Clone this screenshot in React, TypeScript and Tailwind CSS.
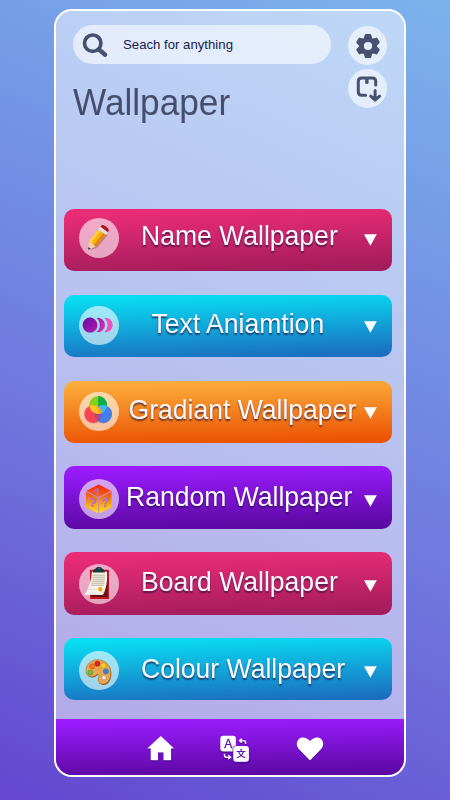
import React from "react";

function PencilIcon() {
  return (
    <svg viewBox="0 0 40 40" className="size-10 shrink-0">
      <path d="M11 32 L18 30 L28.5 17.5 L26 14 Z" fill="#7c2f4f" opacity="0.35" />
      <path d="M9 31.8 L10.6 22.8 L13.6 23.2 L16.9 28.6 Z" fill="#f3cfae" />
      <path d="M9 31.8 L9.6 28.9 L11.7 30.8 Z" fill="#3b3338" />
      <path d="M10.4 22.8 L19.5 11.4 L22 13 L12.6 24.6 Z" fill="#ffd02e" />
      <path d="M12.4 24.7 L21.7 12.9 L24.6 14.8 L14.8 27 Z" fill="#fbb212" />
      <path d="M14.7 27 L24.4 14.7 L26.9 16.7 L17 29 Z" fill="#dd8a0b" />
      <path d="M19.4 11.5 L21.6 8.8 L28.9 14.2 L26.9 16.8 Z" fill="#dfe3e8" />
      <path d="M21.6 8.8 L22.4 7.6 Q23.1 6.6 24.3 7 Q28 8.6 29.4 10.7 Q30 11.6 29.6 12.7 L28.9 14.2 Z" fill="#b51218" />
    </svg>
  );
}

function MotionIcon() {
  return (
    <svg viewBox="0 0 40 40" className="size-10 shrink-0">
      <defs>
        <linearGradient id="motionBall" x1="0" y1="0" x2="1" y2="1">
          <stop offset="0" stopColor="#6a0aa0" />
          <stop offset="1" stopColor="#b31ab0" />
        </linearGradient>
        <linearGradient id="motionMid" x1="0" y1="0" x2="1" y2="1">
          <stop offset="0" stopColor="#a316ab" />
          <stop offset="1" stopColor="#dc35bd" />
        </linearGradient>
      </defs>
      <circle cx="11.2" cy="19.8" r="7.4" fill="#31627e" opacity="0.3" />
      <circle cx="11" cy="19" r="7.4" fill="url(#motionBall)" />
      <path d="M17.6 11.9 A7.2 7.2 0 1 1 17.6 26.1 A9.4 9.4 0 0 0 17.6 11.9Z" fill="url(#motionMid)" />
      <path d="M25.3 11.9 A7.2 7.2 0 1 1 25.3 26.1 A9.4 9.4 0 0 0 25.3 11.9Z" fill="#ee4fbd" />
    </svg>
  );
}

function ColorCirclesIcon() {
  return (
    <svg viewBox="0 0 40 40" className="size-10 shrink-0">
      <defs>
        <clipPath id="cTop"><circle cx="19.2" cy="14" r="8.9" /></clipPath>
        <clipPath id="cLeft"><circle cx="14.2" cy="23" r="8.9" /></clipPath>
        <clipPath id="cRight"><circle cx="24.2" cy="23" r="8.9" /></clipPath>
      </defs>
      <circle cx="14.2" cy="23.8" r="8.9" fill="#a34728" opacity="0.3" />
      <circle cx="24.2" cy="23.8" r="8.9" fill="#a34728" opacity="0.3" />
      <circle cx="19.2" cy="14" r="8.9" fill="#85cf16" />
      <rect x="19.2" y="5" width="10" height="19" fill="#0ead4c" clipPath="url(#cTop)" />
      <circle cx="14.2" cy="23" r="8.9" fill="#fb4354" />
      <circle cx="24.2" cy="23" r="8.9" fill="#437eed" />
      <circle cx="14.2" cy="23" r="8.9" fill="#fdcb20" clipPath="url(#cTop)" />
      <circle cx="24.2" cy="23" r="8.9" fill="#3dbcea" clipPath="url(#cTop)" />
      <g clipPath="url(#cLeft)">
        <circle cx="24.2" cy="23" r="8.9" fill="#e0403d" />
        <rect x="19.2" y="14" width="10" height="18" fill="#7d55cd" clipPath="url(#cRight)" />
        <g clipPath="url(#cRight)">
          <circle cx="19.2" cy="14" r="8.9" fill="#ffc91b" />
          <rect x="19.2" y="13" width="8" height="10" fill="#fb9d24" clipPath="url(#cTop)" />
        </g>
      </g>
    </svg>
  );
}

function DiceIcon() {
  return (
    <svg viewBox="0 0 40 40" className="size-10 shrink-0">
      <defs>
        <linearGradient id="dice" x1="0" y1="0" x2="0" y2="1">
          <stop offset="0" stopColor="#fb2307" />
          <stop offset="0.35" stopColor="#fb5a0b" />
          <stop offset="0.75" stopColor="#feb715" />
          <stop offset="1" stopColor="#ffe526" />
        </linearGradient>
      </defs>
      <path d="M19.7 5.5 L32.5 12 V28.2 L19.7 34.8 L6.9 28.2 V12 Z" fill="url(#dice)" />
      <path d="M7 12.3 L19.7 18.8 L32.4 12.3 M19.7 18.8 V34.8" fill="none" stroke="#c392cb" strokeWidth="1.2" />
      <g fill="#a878c4" stroke="#a878c4" strokeWidth="0.3" fontFamily="Liberation Sans, sans-serif" fontWeight="700" textAnchor="middle">
        <text fontSize="13" transform="translate(13.2 27.8) skewY(25)">?</text>
        <text fontSize="13" transform="translate(26.2 27.8) skewY(-25)">?</text>
        <text fontSize="10" transform="translate(19.8 15.4) rotate(-30) scale(1.15 .85)">?</text>
      </g>
    </svg>
  );
}

function BoardIcon() {
  return (
    <svg viewBox="0 0 40 40" className="size-10 shrink-0">
      <rect x="11" y="5.7" width="19" height="29.2" rx="0.6" fill="#c31222" />
      <path d="M12.5 8 H28.5 V33 H12.5Z" fill="#641018" />
      <path d="M12.8 7.8 H28 C28.6 16 27.5 25 23.7 31 L5.3 30.8 C9.8 25 12.2 17 12.8 7.8Z" fill="#f7f2e9" />
      <path d="M23.7 31 C23.8 29.4 23.5 28.4 22.8 27.4 C25 28.3 26.2 27 27 23.5 C26.4 26.4 25.3 29 23.7 31Z" fill="#d5c9b6" />
      <g stroke="#b8ab91" strokeWidth="0.9">
        <path d="M14 11.2 H26.2 M13.7 13.2 H26.1 M13.4 15.2 H25.9 M13 17.2 H25.6 M12.4 19.2 H25.2 M11.8 21.2 H24.7" />
      </g>
      <path d="M9.6 25.5 H16" stroke="#d1c8b6" strokeWidth="0.6" />
      <circle cx="21.3" cy="25.2" r="2.2" fill="#efa91b" />
      <path d="M14 8.6 Q14 5.4 16.4 4.8 Q17.6 2.7 20 2.7 Q22.3 2.7 23.4 4.8 Q25.8 5.4 25.8 8.6Z" fill="#123b3e" />
      <circle cx="20" cy="4.4" r="0.8" fill="#42777a" />
    </svg>
  );
}

function PaletteIcon() {
  const shape =
    "M7 19.8 C7 13 12.2 8.7 18.6 8.7 C26.2 8.7 31.8 14.5 31.8 21.6 C31.8 28.4 29 33 24 33 C20.8 33 19 31 19.3 28.2 C19.6 25.6 20.8 24.4 19.2 23.4 C17.4 22.3 16.8 25.5 13.2 25.7 C9.4 25.8 7 23.2 7 19.8Z";
  return (
    <svg viewBox="0 0 40 40" className="size-10 shrink-0">
      <path d={shape} fill="#76512c" transform="translate(0.5 0.8)" />
      <path d={shape} fill="#eba750" stroke="#a86d2b" strokeWidth="0.6" />
      <g strokeWidth="0.4">
        <circle cx="11.3" cy="21.5" r="2.5" fill="#62c23c" stroke="#3f782b" />
        <circle cx="13.1" cy="15.4" r="2.6" fill="#f7761a" stroke="#ae4a13" />
        <circle cx="18.4" cy="12.7" r="2.6" fill="#dc2222" stroke="#901616" />
        <circle cx="24.3" cy="14.6" r="2.5" fill="#f1d321" stroke="#a68813" />
        <circle cx="27" cy="20.3" r="2.6" fill="#3587e2" stroke="#225793" />
        <circle cx="25" cy="26.7" r="2.1" fill="#f1f7fa" stroke="#8a6238" />
      </g>
    </svg>
  );
}

const pink = "bg-[linear-gradient(178deg,#ea2c77_8%,#a31c5b_95%)]";
const blue = "bg-[linear-gradient(178deg,#08def2_5%,#1b6ec0_95%)]";
const orange = "bg-[linear-gradient(179deg,#fcaf3d_2%,#eb5202_96%)]";
const purple = "bg-[linear-gradient(179deg,#9c1cff_4%,#5a08a0_96%)]";

const rows = [
  { label: "Name Wallpaper", icon: <PencilIcon />, color: pink, pad: "pt-[9px]", indent: "ml-[22.5px]" },
  { label: "Text Aniamtion", icon: <MotionIcon />, color: blue, pad: "pt-[11px]", indent: "ml-[33px]" },
  { label: "Gradiant Wallpaper", icon: <ColorCirclesIcon />, color: orange, pad: "pt-[11px]", indent: "ml-[10px]" },
  { label: "Random Wallpaper", icon: <DiceIcon />, color: purple, pad: "pt-[13px]", indent: "ml-[7.5px]" },
  { label: "Board Wallpaper", icon: <BoardIcon />, color: pink, pad: "pt-[12px]", indent: "ml-[22.5px]" },
  { label: "Colour Wallpaper", icon: <PaletteIcon />, color: blue, pad: "pt-[13px]", indent: "ml-[22.5px]" },
];

function Header() {
  return (
    <header className="flex h-[198px] shrink-0 justify-between pl-[17px] pr-[17px]">
      <div className="w-[258px] pt-[13.5px]">
        <div className="flex h-[39px] items-center rounded-full bg-white/60 pl-[9px]">
          <svg viewBox="0 0 26 26" className="size-[26px]" fill="none" stroke="#454f6e">
            <circle cx="10.7" cy="12.2" r="8.2" strokeWidth="3.7" />
            <path d="M17 18.5 L23 23.7" strokeWidth="4.4" strokeLinecap="round" />
          </svg>
          <span className="ml-[15px] pt-px text-[13.2px] leading-[15px] text-[#17204f]">Seach for anything</span>
        </div>
        <h1 className="mt-[18.5px] origin-left scale-y-[1.03] text-[35.2px] leading-[41px] text-[#454d6b]">Wallpaper</h1>
      </div>
      <div className="flex flex-col gap-1 pt-[15px]">
        <div className="flex size-[39px] items-center justify-center rounded-full bg-white/60">
          <svg viewBox="-13 -13 26 26" className="size-[26px]" fill="#48516f">
            <circle r="6.5" fill="none" stroke="#48516f" strokeWidth="4.8" />
            {[0, 60, 120, 180, 240, 300].map((angle) => (
              <path key={angle} transform={`rotate(${angle})`} d="M-4.3 -7 L-3.2 -11.2 Q-3 -12.1 -2.1 -12.1 H2.1 Q3 -12.1 3.2 -11.2 L4.3 -7Z" />
            ))}
          </svg>
        </div>
        <div className="flex size-[39px] items-center justify-center rounded-full bg-white/60">
          <svg viewBox="0 0 39 39" className="size-[39px]" fill="none" stroke="#48516f" strokeWidth="3" strokeLinecap="round" strokeLinejoin="round">
            <path d="M17.6 26.2 H13.8 Q10.3 26.2 10.3 22.7 V12.4 Q10.3 8.9 13.8 8.9 H24.2 Q27.7 8.9 27.7 12.4 V16" />
            <path d="M18.9 10 V13.4" strokeWidth="3.4" />
            <path d="M27.1 21.5 V30.3 M22.7 27.2 L27.1 31 L31.6 27.2" />
          </svg>
        </div>
      </div>
    </header>
  );
}

function NavBar() {
  return (
    <nav className="flex h-14 shrink-0 items-start bg-[linear-gradient(179deg,#9c1cff_4%,#5a08a0_98%)] pl-[91px] pt-[16px] [&>svg]:drop-shadow-[0_1px_0.6px_#3b0878]">
      <svg viewBox="0 0 28 28" className="size-7" fill="#fff">
        <path d="M13.7 1.2 Q14.2 1.2 14.6 1.7 L27.1 13.4 H24 V24.6 Q24 25.2 23.4 25.2 H16.5 V17.5 H11 V25.2 H4.4 Q3.7 25.2 3.7 24.6 V13.4 H.2 L12.9 1.7 Q13.3 1.2 13.7 1.2Z" />
      </svg>
      <svg viewBox="0 0 30 28" className="ml-[45px] h-7 w-[30px]">
        <rect x=".3" y=".8" width="15.6" height="15.6" rx="3" fill="#fff" />
        <text x="8.2" y="12.9" fontSize="12" textAnchor="middle" fontFamily="Liberation Sans, sans-serif" fill="#5c15a3" stroke="#5c15a3" strokeWidth="0.3">A</text>
        <rect x="12.6" y="10.4" width="17" height="17" rx="3.5" fill="#7412ca" />
        <rect x="13.3" y="11.1" width="15.6" height="15.6" rx="3" fill="#fff" />
        <text x="21.1" y="22.3" fontSize="9.5" fontWeight="700" textAnchor="middle" fontFamily="Liberation Sans, Noto Sans CJK SC, sans-serif" fill="#5c15a3">文</text>
        <path d="M25.6 9 V7.5 Q25.6 5.8 23.5 5.8 H20 M21.8 3.6 L19.5 5.8 L21.8 7.8 M4.5 18.7 V20.2 Q4.5 22.3 6.7 22.3 H10 M8.3 20.3 L10.6 22.3 L8.3 24.3" fill="none" stroke="#f6e9ff" strokeWidth="1.5" />
      </svg>
      <svg viewBox="0 0 28 28" className="ml-[46px] size-7" fill="#fff">
        <path d="M14 25.5 L3.2 14.5 C-.1 11.1 .2 6.4 3 4 C6.2 1.4 10.8 2.7 14 6 C17.2 2.7 21.8 1.4 25 4 C27.8 6.4 28.1 11.1 24.8 14.5Z" />
      </svg>
    </nav>
  );
}

export default function App() {
  return (
    <div className="flex h-[800px] w-[450px] items-start bg-[linear-gradient(204deg,#7db3ed_0%,#7498e6_27%,#6f74dd_62%,#6347cf_100%)] pl-[54px] pt-[9px] font-['Liberation_Sans',Arial,sans-serif]">
      <div className="flex h-[768px] w-[352px] flex-col overflow-hidden rounded-[18px] border-2 border-white bg-white/50 bg-clip-padding">
        <Header />
        <main className="flex flex-1 flex-col gap-[23.4px] pl-2 pr-3">
          {rows.map((row) => (
            <button key={row.label} className={`flex h-[62.4px] shrink-0 items-start rounded-[10px] pl-[15px] pr-[15.5px] text-left ${row.color} ${row.pad}`}>
              <span className="flex size-[39.5px] shrink-0 items-center justify-center rounded-full bg-white/60">{row.icon}</span>
              <span className={`w-0 flex-1 scale-y-[1.05] whitespace-nowrap pt-[0.4px] text-[26.55px] leading-[36px] text-[#fcfaff] [text-shadow:0_1.5px_1.5px_rgba(30,15,60,0.65)] ${row.indent}`}>{row.label}</span>
              <svg viewBox="0 0 13 12" className="mt-[15.5px] h-3 w-[13px] shrink-0" fill="#fff">
                <path d="M0 .3 H12.8 L6.4 11.7Z" />
              </svg>
            </button>
          ))}
        </main>
        <NavBar />
      </div>
    </div>
  );
}
